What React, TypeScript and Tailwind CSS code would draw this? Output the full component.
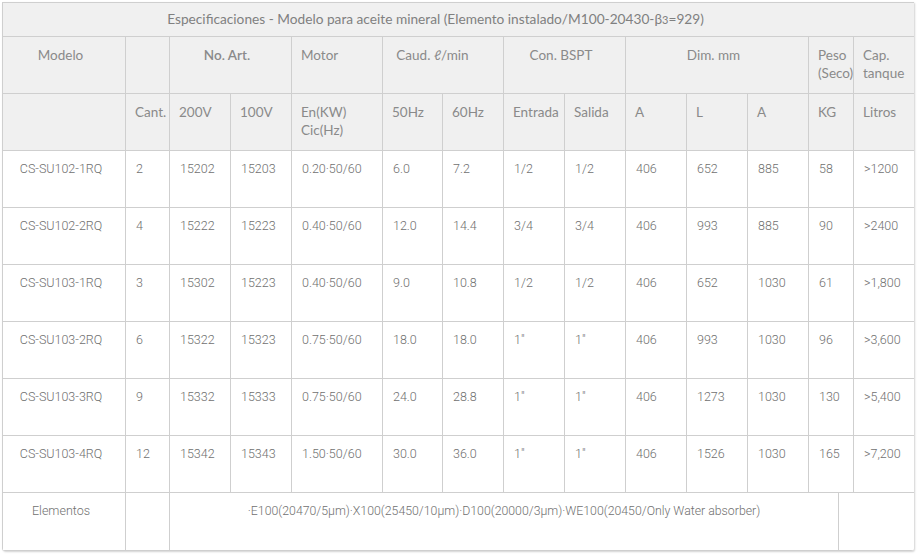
const widths = [123, 44, 61, 61, 91, 60, 61, 61, 61, 61, 61, 61, 45, 61];

const rows = [
  ["CS-SU102-1RQ", "2", "15202", "15203", "0.20·50/60", "6.0", "7.2", "1/2", "1/2", "406", "652", "885", "58", ">1200"],
  ["CS-SU102-2RQ", "4", "15222", "15223", "0.40·50/60", "12.0", "14.4", "3/4", "3/4", "406", "993", "885", "90", ">2400"],
  ["CS-SU103-1RQ", "3", "15302", "15223", "0.40·50/60", "9.0", "10.8", "1/2", "1/2", "406", "652", "1030", "61", ">1,800"],
  ["CS-SU103-2RQ", "6", "15322", "15323", "0.75·50/60", "18.0", "18.0", "1\"", "1\"", "406", "993", "1030", "96", ">3,600"],
  ["CS-SU103-3RQ", "9", "15332", "15333", "0.75·50/60", "24.0", "28.8", "1\"", "1\"", "406", "1273", "1030", "130", ">5,400"],
  ["CS-SU103-4RQ", "12", "15342", "15343", "1.50·50/60", "30.0", "36.0", "1\"", "1\"", "406", "1526", "1030", "165", ">7,200"],
];

const head = "border border-[#cfcfcf] bg-[#f0f0f0] align-top pt-[9px] px-[9px] leading-[18px] text-[#8a8a8a] text-[13.5px] font-normal";
const cell = "border border-[#cfcfcf] align-top pt-[9px] px-[10px] leading-[18px] text-[#707070] text-[12.5px] font-light";

export default function App() {
  return (
    <div className="p-[2px] bg-white w-[919px] h-[555px]">
      <div className="w-[912px] rounded-b-[3px] shadow-[1px_1px_2px_rgba(0,0,0,0.18)] overflow-hidden">
        <table
          className="table-fixed border-collapse w-[912px] border border-[#cccccc]"
          style={{ fontFamily: "Lato, 'Liberation Sans', sans-serif" }}
        >
          <colgroup>
            {widths.map((w, i) => (
              <col key={i} style={{ width: w }} />
            ))}
          </colgroup>
          <thead>
            <tr className="h-[34px]">
              <th colSpan={14} className="border border-[#cfcfcf] bg-[#f0f0f0] text-center pr-[46px] text-[13.7px] font-normal text-[#808080]">
                Especificaciones - Modelo para aceite mineral (Elemento instalado/M100-20430-β<span className="text-[11px]">3</span>=929)
              </th>
            </tr>
            <tr className="h-[57px]">
              <th className={`${head} text-center pr-[16px]`}>Modelo</th>
              <th className={head}></th>
              <th colSpan={2} className={`${head} text-center pr-[16px] font-semibold`}>No. Art.</th>
              <th className={`${head} text-left`}>Motor</th>
              <th colSpan={2} className={`${head} text-center pr-[30px]`}>Caud. ℓ/min</th>
              <th colSpan={2} className={`${head} text-center pr-[16px]`}>Con. BSPT</th>
              <th colSpan={3} className={`${head} text-center pr-[16px]`}>Dim. mm</th>
              <th className={`${head} text-left pr-0 whitespace-nowrap`}>Peso<br />(Seco)</th>
              <th className={`${head} text-left`}>Cap.<br />tanque</th>
            </tr>
            <tr className="h-[57px]">
              <th className={head}></th>
              {["Cant.", "200V", "100V"].map((t) => (
                <th key={t} className={`${head} text-left`}>{t}</th>
              ))}
              <th className={`${head} text-left`}>En(KW)<br />Cic(Hz)</th>
              {["50Hz", "60Hz", "Entrada", "Salida", "A", "L", "A", "KG", "Litros"].map((t, i) => (
                <th key={i} className={`${head} text-left ${t === "Entrada" ? "px-[8px]" : ""}`}>{t}</th>
              ))}
            </tr>
          </thead>
          <tbody style={{ fontFamily: "Roboto, 'Liberation Sans', sans-serif" }}>
            {rows.map((r, i) => (
              <tr key={i} className="h-[57px]">
                {r.map((v, j) => (
                  <td key={j} className={`${cell} ${j === 0 ? "text-center pr-[16px]" : "text-left"}`}>{v}</td>
                ))}
              </tr>
            ))}
            <tr className="h-[58px]">
              <td className={`${cell} text-center pr-[16px]`}>Elementos</td>
              <td className={cell}></td>
              <td colSpan={12} className="border border-[#cfcfcf] p-0 align-top">
                <div className="flex h-[57px]">
                  <div className="flex-1 border-r border-[#cfcfcf] text-center pt-[9px] leading-[18px] text-[#707070] text-[12.3px] font-light">
                    ·E100(20470/5μm)·X100(25450/10μm)·D100(20000/3μm)·WE100(20450/Only Water absorber)
                  </div>
                  <div className="w-[75px]"></div>
                </div>
              </td>
            </tr>
          </tbody>
        </table>
      </div>
    </div>
  );
}
